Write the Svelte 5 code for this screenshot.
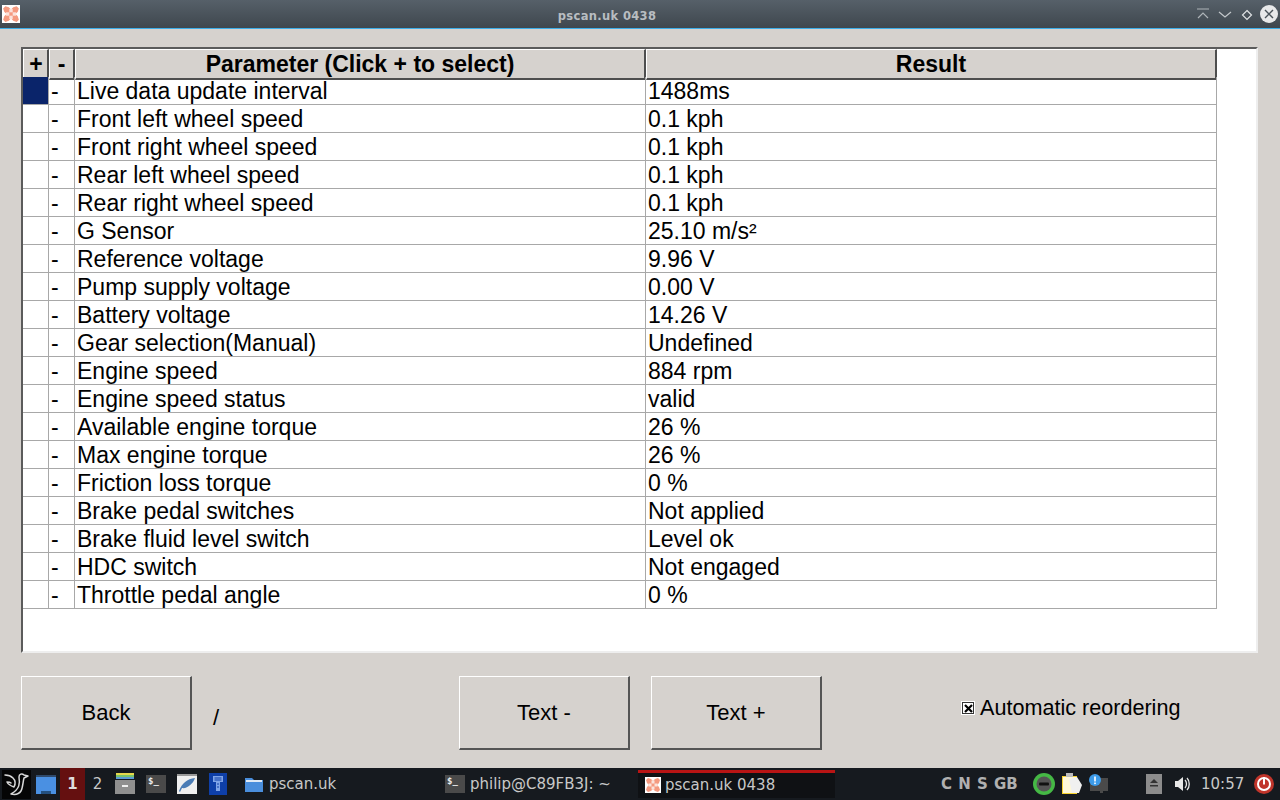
<script>
  const rows = [
    ['Live data update interval', '1488ms'],
    ['Front left wheel speed', '0.1 kph'],
    ['Front right wheel speed', '0.1 kph'],
    ['Rear left wheel speed', '0.1 kph'],
    ['Rear right wheel speed', '0.1 kph'],
    ['G Sensor', '25.10 m/s²'],
    ['Reference voltage', '9.96 V'],
    ['Pump supply voltage', '0.00 V'],
    ['Battery voltage', '14.26 V'],
    ['Gear selection(Manual)', 'Undefined'],
    ['Engine speed', '884 rpm'],
    ['Engine speed status', 'valid'],
    ['Available engine torque', '26 %'],
    ['Max engine torque', '26 %'],
    ['Friction loss torque', '0 %'],
    ['Brake pedal switches', 'Not applied'],
    ['Brake fluid level switch', 'Level ok'],
    ['HDC switch', 'Not engaged'],
    ['Throttle pedal angle', '0 %']
  ];
</script>

{#snippet appIcon(size)}
  <svg width={size} height={size} viewBox="0 0 16 16" class="appicon">
    <rect width="16" height="16" fill="#fff"/>
    <path d="M1 3 L3 1 L6 2 L8 4 L10 2 L13 1 L15 3 L14 6 L12 8 L14 10 L15 13 L13 15 L10 14 L8 12 L6 14 L3 15 L1 13 L2 10 L4 8 L2 6 Z" fill="#f59a80"/>
    <rect x="6.5" y="3.5" width="3" height="3" fill="#fbe3dc"/>
    <rect x="3.5" y="6.5" width="3" height="3" fill="#fbe3dc"/>
    <rect x="9.5" y="6.5" width="3" height="3" fill="#fbe3dc"/>
    <rect x="6.5" y="9.5" width="3" height="3" fill="#fbe3dc"/>
  </svg>
{/snippet}

<div class="screen">
  <header class="titlebar">
    <div class="ticon">{@render appIcon(18)}</div>
    <div class="ttext">pscan.uk 0438</div>
    <div class="tbtns">
      <svg width="14" height="14" viewBox="0 0 14 14" fill="none" stroke="#aeb4b8" stroke-width="1.2"><path d="M1 2H13M2 11L7 6L12 11"/></svg>
      <svg class="down" width="14" height="14" viewBox="0 0 14 14" fill="none" stroke="#c3c8cb" stroke-width="1.2"><path d="M1 4L7 9L13 4"/></svg>
      <svg class="diamond" width="12" height="12" viewBox="0 0 12 12" fill="none" stroke="#dfe2e4" stroke-width="1.2"><path d="M6 1.5L10.5 6L6 10.5L1.5 6Z"/></svg>
      <svg class="closebtn" width="18" height="18" viewBox="0 0 18 18"><circle cx="9" cy="9" r="9" fill="#e8e9ea"/><path d="M5 5L13 13M13 5L5 13" stroke="#4a535a" stroke-width="1.4"/></svg>
    </div>
  </header>

  <main class="body">
    <div class="frame">
      <div class="grid head">
        <div class="hc pm">+</div>
        <div class="hc">-</div>
        <div class="hc">Parameter (Click + to select)</div>
        <div class="hc">Result</div>
      </div>
      {#each rows as r, i}
        <div class="grid row">
          <div class="c plus" class:sel={i === 0}></div>
          <div class="c minus">-</div>
          <div class="c">{r[0]}</div>
          <div class="c">{r[1]}</div>
        </div>
      {/each}
    </div>

    <div class="actions">
      <button class="btn">Back</button>
      <span class="slash">/</span>
      <button class="btn textminus">Text -</button>
      <button class="btn textplus">Text +</button>
      <label class="auto">
        <span class="check"><svg width="9" height="9" viewBox="0 0 9 9"><path d="M1 1L8 8M8 1L1 8" stroke="#000" stroke-width="2.2"/></svg></span>
        Automatic reordering
      </label>
    </div>
  </main>

  <footer class="taskbar">
    <div class="menu">
      <svg width="29" height="29" viewBox="0 0 29 29" fill="none" stroke="#d8d8d8" stroke-width="1.5" stroke-linejoin="round" stroke-linecap="round">
        <path d="M3 5C6 5 9 6 11 8C13 10 14 13 12 17C9 16 6 14 5 12C7 12 8 12 9 13"/>
        <path d="M26 6L22 5C20 3 17 4 17 7C18 13 18 19 9 24C13 25 17 24 19 21C21 17 21 11 22 8Z"/>
      </svg>
    </div>
    <div class="launch-icon">
      <svg width="20" height="20" viewBox="0 0 20 20"><rect y="1" width="20" height="19" fill="#4a90e2"/><rect y="1" width="20" height="2" fill="#2f4a6b"/><rect x="5" y="17" width="10" height="3" fill="#24507f"/></svg>
    </div>
    <div class="ws active">1</div>
    <div class="ws">2</div>
    <div class="launch">
      <svg width="20" height="22" viewBox="0 0 20 22"><rect y="0" width="18" height="2" fill="#e6d84c" x="1"/><rect y="2" width="18" height="2" fill="#7ac36a" x="1"/><rect y="4" width="18" height="2" fill="#5b9bd5" x="1"/><rect y="7" width="20" height="14" fill="#8f8f8f"/><rect x="7" y="12" width="6" height="2" fill="#eee"/></svg>
      <div class="termicon">$_</div>
      <svg width="20" height="20" viewBox="0 0 20 20"><rect width="20" height="20" fill="#efefef"/><rect width="20" height="2" fill="#999"/><path d="M2 17C5 9 10 5 18 4C16 10 10 15 5 14L3 18Z" fill="#4a7cb5"/></svg>
      <svg class="blueapp" width="18" height="22" viewBox="0 0 18 22"><rect width="18" height="22" fill="#0e3fa8"/><path d="M4 3H14V9H11V18H7V9H4Z" fill="#7fa4e8"/><path d="M5.5 5H12.5M5.5 7H12.5M8 11H10M8 14H10" stroke="#0e3fa8"/></svg>
    </div>
    <div class="task t1">
      <svg width="18" height="16" viewBox="0 0 18 16"><path d="M0 2H7L9 4H18V16H0Z" fill="#4a8edc"/><rect y="4" x="1" width="16" height="2" fill="#dfe9f5"/></svg>
      <span>pscan.uk</span>
    </div>
    <div class="task t2">
      <div class="termicon small">$_</div>
      <span>philip@C89FB3J: ~</span>
    </div>
    <div class="task t3">
      {@render appIcon(16)}
      <span>pscan.uk 0438</span>
    </div>
    <div class="kbd">C N S GB</div>
    <div class="tray">
      <svg width="22" height="22" viewBox="0 0 22 22"><circle cx="11" cy="11" r="11" fill="#45b845"/><circle cx="11" cy="11" r="7.5" fill="#555"/><rect x="6" y="9.5" width="10" height="3" rx="1" fill="#111"/></svg>
      <svg width="20" height="22" viewBox="0 0 20 22"><rect y="3" width="15" height="18" fill="#f7d22e"/><rect x="1" y="4" width="13" height="16" fill="#fff8d8"/><rect x="4" y="0" width="7" height="4" fill="#bbb"/><path d="M7 6L15 4L20 12L17 20L10 20Z" fill="#f0f0f0"/></svg>
      <svg class="note" width="19" height="20" viewBox="0 0 19 20"><rect x="1" y="4" width="18" height="13" fill="#4a4a4a"/><rect x="11" y="17" width="3" height="2" fill="#4a4a4a"/><circle cx="6" cy="6" r="6" fill="#3d9be9"/><rect x="5.2" y="2.5" width="1.6" height="5" fill="#fff"/><rect x="5.2" y="8.5" width="1.6" height="1.6" fill="#fff"/></svg>
    </div>
    <svg class="eject" width="16" height="20" viewBox="0 0 16 20"><rect width="16" height="20" fill="#8c8c8c"/><path d="M4 9L8 5L12 9Z" fill="#333"/><rect x="4" y="11" width="8" height="1.5" fill="#333"/></svg>
    <svg class="vol" width="16" height="16" viewBox="0 0 16 16"><path d="M0 5H3L8 1V15L3 11H0Z" fill="#e8e8e8"/><path d="M10 4C12 6 12 10 10 12M12 2C15 5 15 11 12 14" fill="none" stroke="#e8e8e8" stroke-width="1.3"/></svg>
    <div class="clock">10:57</div>
    <svg class="power" width="20" height="20" viewBox="0 0 20 20"><circle cx="10" cy="10" r="10" fill="#c0352b"/><circle cx="10" cy="10" r="6" fill="none" stroke="#fff" stroke-width="2"/><rect x="9" y="3" width="2" height="7.5" fill="#fff"/></svg>
  </footer>
</div>

<style>
  :global(body) { margin: 0; background: #d6d2ce; }
  .screen {
    width: 1280px; height: 800px; display: flex; flex-direction: column; overflow: hidden;
    font-family: "Liberation Sans", Arial, sans-serif; color: #000; background: #d6d2ce;
  }
  .titlebar {
    height: 28px; flex: none; display: flex; align-items: center; position: relative;
    background: linear-gradient(#566069, #3f474e); border-bottom: 1px solid #3daee9;
  }
  .ticon { width: 18px; height: 18px; margin-left: 2px; margin-top: -1px; display: flex; }
  .appicon { display: block; }
  .ttext {
    position: absolute; left: 0; right: 66px; text-align: center; top: 9px;
    font: bold 11.5px "DejaVu Sans", sans-serif; color: #b8bdc1; letter-spacing: 0.35px;
  }
  .tbtns { margin-left: auto; margin-right: 2px; display: flex; align-items: center; gap: 8px; margin-top: 0; }
  .down { margin-top: 1px; }
  .diamond { margin-left: 1px; margin-top: 1px; }
  .closebtn { margin-left: -1px; }
  .body { flex: 1; padding: 18px 22px 0 21px; display: flex; flex-direction: column; }
  .frame {
    height: 602px; width: 1233px; background: #fff; box-sizing: content-box;
    border-top: 2px solid #5b5b5b; border-left: 2px solid #5b5b5b;
    border-right: 2px solid #eeeeee; border-bottom: 2px solid #eeeeee;
    padding-left: 0; flex: none; margin-right: -1px;
  }
  .grid { display: grid; grid-template-columns: 26px 26px 571px 571px; width: 1194px; }
  .head { height: 28px; }
  .hc {
    background: #d6d2ce; border-right: 2px solid #4e4e4e; border-bottom: 2px solid #4e4e4e;
    box-sizing: border-box; text-align: center; font-weight: bold; font-size: 23px; line-height: 28px;
    border-left: 1px solid #fff; border-top: 1px solid #fff;
  }
  .pm { padding-left: 1px; }
  .row { height: 28px; }
  .c {
    box-sizing: border-box; border-right: 1px solid #a8a8a8; border-bottom: 1px solid #a8a8a8;
    padding-left: 2px; font-size: 23px; line-height: 28px; white-space: nowrap; overflow: hidden;
  }
  .minus { padding-left: 2px; }
  .sel { background: #0a246a; }
  .actions { position: relative; display: flex; align-items: flex-start; margin-top: 23px; height: 74px; font-size: 22px; }
  .btn {
    width: 171px; height: 74px; background: #d6d2ce; box-sizing: border-box; padding: 0; margin: 0;
    border-style: solid; border-width: 1px 2px 2px 1px;
    border-color: #fff #555 #555 #fff; border-radius: 0;
    font: 22px "Liberation Sans", Arial, sans-serif; color: #000;
  }
  .slash { width: 267px; padding-left: 21px; box-sizing: border-box; margin-top: 29px; line-height: 26px; }
  .textplus { margin-left: 21px; }
  .auto { position: absolute; left: 941px; top: 19px; display: flex; align-items: center; line-height: 26px; white-space: nowrap; font-size: 21.6px; }
  .check {
    width: 12px; height: 12px; box-sizing: border-box; border: 1px solid #333; background: #fff; outline: 1px solid #fff;
    display: flex; align-items: center; justify-content: center; margin-right: 6px;
  }
  .taskbar {
    height: 32px; flex: none; background: #161a1f; display: flex; align-items: center; position: relative;
    color: #c8c8c8; font: 15px "DejaVu Sans", sans-serif;
  }
  .menu { width: 29px; height: 29px; background: #050505; margin-left: 2px; display: flex; align-items: center; justify-content: center; }
  .launch-icon { margin-left: 5px; display: flex; }
  .ws { width: 25px; height: 32px; line-height: 32px; text-align: center; font-size: 15px; }
  .ws.active { background: #651010; margin-left: 4px; font-weight: bold; color: #ddd; }
  .launch { display: flex; align-items: center; gap: 11px; margin-left: 5px; }
  .blueapp { margin-left: 1px; }
  .termicon {
    width: 20px; height: 18px; background: #4a4a4a; color: #eee; font: bold 9px "DejaVu Sans Mono", monospace;
    padding-left: 2px; box-sizing: border-box; line-height: 12px;
  }
  .task { position: absolute; display: flex; align-items: center; gap: 6px; top: 0; height: 32px; font-size: 15px; }
  .t1 { left: 245px; }
  .t2 { left: 445px; gap: 5px; }
  .t3 { left: 638px; width: 197px; background: #0f1114; border-top: 3px solid #b81414; height: 28px; top: 2px; padding: 0 0 2px 7px; box-sizing: border-box; gap: 4px; }
  .kbd { position: absolute; left: 941px; top: 7px; font-weight: bold; color: #b0b0b0; font-size: 15px; word-spacing: 1px; }
  .tray { position: absolute; left: 1033px; top: 4px; height: 24px; display: flex; align-items: center; gap: 7px; }
  .note { margin-left: 0; }
  .eject { position: absolute; left: 1146px; top: 6px; }
  .vol { position: absolute; left: 1175px; top: 8px; }
  .clock { position: absolute; left: 1201px; top: 7px; font-size: 15px; }
  .power { position: absolute; left: 1254px; top: 6px; }
</style>
